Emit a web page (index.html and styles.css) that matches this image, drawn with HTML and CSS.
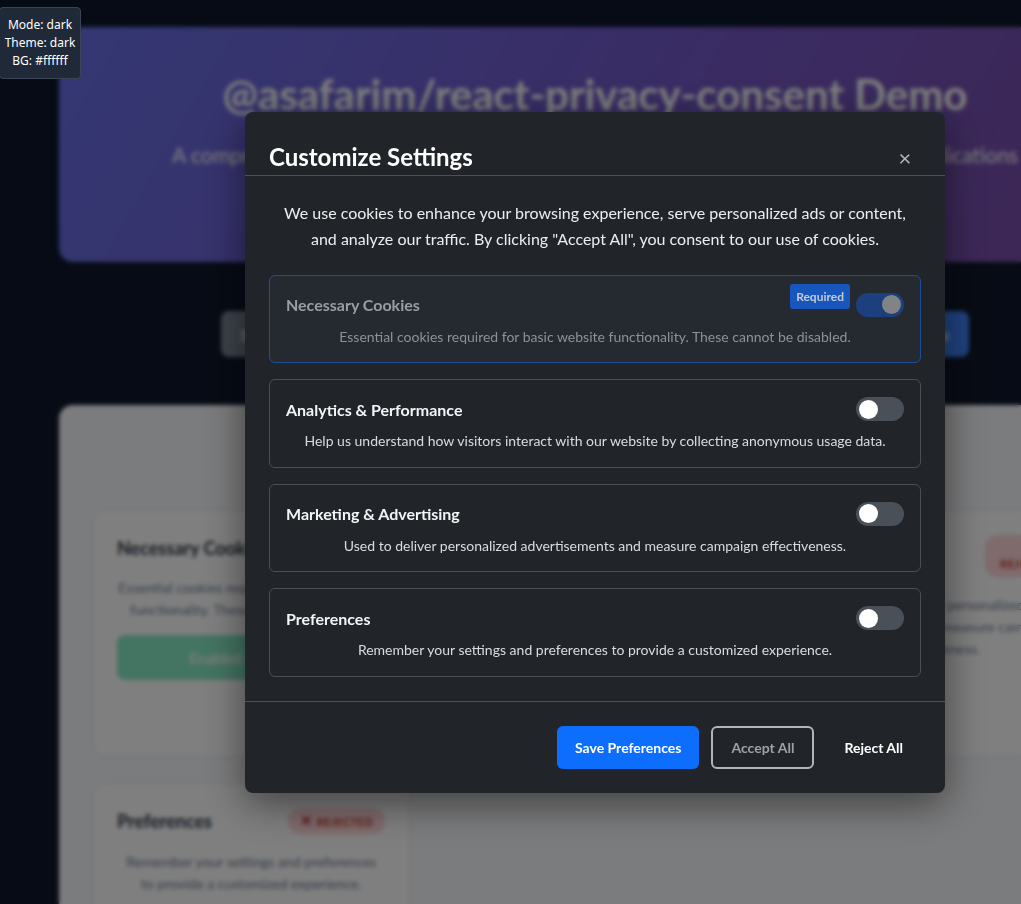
FILE: index.html
```html
<!DOCTYPE html>
<html lang="en">
<head>
<meta charset="utf-8">
<title>react-privacy-consent Demo</title>
<link rel="stylesheet" href="styles.css">
</head>
<body>
<div class="page">
  <header class="hero">
    <h1>@asafarim/react-privacy-consent Demo</h1>
    <p>A comprehensive, customizable privacy consent management solution for React applications</p>
  </header>
  <div class="actions">
    <button class="act act-gray">Show Banner</button>
    <button class="act act-gray">Open Settings</button>
    <button class="act act-gray">Reset Consent</button>
    <button class="act act-gray">Toggle Theme</button>
    <button class="act act-blue">Toggle Mode</button>
  </div>
  <section class="demo">
    <h2>Current Consent Status</h2>
    <div class="grid">
      <div class="dcard">
        <div class="dhead"><h3>Necessary Cookies</h3><span class="status ok">✓ Accepted</span></div>
        <p>Essential cookies required for basic website functionality. These cannot be disabled.</p>
        <div class="dbtn">Enabled (Required)</div>
      </div>
      <div class="dcard">
        <div class="dhead"><h3>Analytics</h3><span class="status no">✕ Rejected</span></div>
        <p>Help us understand how visitors interact with our website.</p>
      </div>
      <div class="dcard">
        <div class="dhead"><h3>Marketing &amp; Ads</h3><span class="status no wrap"><span>✕</span><span>Rejected</span></span></div>
        <p>Used to deliver personalized advertisements and measure campaign effectiveness.</p>
      </div>
      <div class="dcard">
        <div class="dhead"><h3>Preferences</h3><span class="status no"><span class="x">✕</span> Rejected</span></div>
        <p class="narrow">Remember your settings and preferences to provide a customized experience.</p>
      </div>
    </div>
  </section>
</div>

<div class="overlay">
  <div class="modal" role="dialog" aria-label="Customize Settings">
    <div class="mhead">
      <h2>Customize Settings</h2>
      <button class="close" aria-label="Close">×</button>
    </div>
    <div class="mbody">
      <p class="intro">We use cookies to enhance your browsing experience, serve personalized ads or content, and analyze our traffic. By clicking "Accept All", you consent to our use of cookies.</p>
      <div class="cat cat-required">
        <div class="cat-row">
          <h3>Necessary Cookies</h3>
          <div class="cat-ctrl">
            <span class="req">Required</span>
            <span class="toggle on disabled"><span class="knob"></span></span>
          </div>
        </div>
        <p>Essential cookies required for basic website functionality. These cannot be disabled.</p>
      </div>
      <div class="cat">
        <div class="cat-row">
          <h3>Analytics &amp; Performance</h3>
          <span class="toggle"><span class="knob"></span></span>
        </div>
        <p>Help us understand how visitors interact with our website by collecting anonymous usage data.</p>
      </div>
      <div class="cat">
        <div class="cat-row">
          <h3>Marketing &amp; Advertising</h3>
          <span class="toggle"><span class="knob"></span></span>
        </div>
        <p>Used to deliver personalized advertisements and measure campaign effectiveness.</p>
      </div>
      <div class="cat">
        <div class="cat-row">
          <h3>Preferences</h3>
          <span class="toggle"><span class="knob"></span></span>
        </div>
        <p>Remember your settings and preferences to provide a customized experience.</p>
      </div>
    </div>
    <div class="mfoot">
      <button class="btn btn-save">Save Preferences</button>
      <button class="btn btn-accept">Accept All</button>
      <button class="btn btn-reject">Reject All</button>
    </div>
  </div>
</div>

<div class="debug">
  <div>Mode: dark</div>
  <div>Theme: dark</div>
  <div>BG: #ffffff</div>
</div>
</body>
</html>
```
FILE: styles.css
```css
* { box-sizing: border-box; }
html, body { margin: 0; overflow: hidden; }
body {
  width: 1190px;
  height: 904px;
  background: #0f172a;
  font-family: Lato, "Liberation Sans", sans-serif;
  position: relative;
}

/* background demo page */
.page { padding: 27px 59px 0; }
.hero {
  height: 235px;
  border-radius: 14px;
  background: linear-gradient(120deg, #6870e8 0%, #7458c8 55%, #7a4ca4 100%);
  color: #fff;
  text-align: center;
  padding-top: 42px;
}
.hero h1 { margin: 0; font-size: 42px; line-height: 50px; font-weight: 700; }
.hero p { margin: 24px 0 0; font-size: 21px; line-height: 24px; }

.actions { margin-top: 49px; display: flex; justify-content: center; gap: 16px; }
.act {
  height: 46px; padding: 0 20px; border: 0; border-radius: 8px;
  font: 600 16px Lato, sans-serif; color: #fff;
}
.act-gray { background: #7b8494; }
.act-blue { background: #3f86ff; }

.demo {
  margin-top: 48px;
  background: #f7f8fa;
  border-radius: 14px;
  padding: 34px;
  height: 600px;
}
.demo h2 { margin: 0 0 39px; font-size: 24px; line-height: 32px; text-align: center; color: #2d3748; }
.grid { display: grid; grid-template-columns: repeat(3, 1fr); gap: 26px; }
.dcard {
  background: #fff; border: 1px solid #e6e8ec; border-radius: 12px;
  padding: 24px 24px 24px 23px; min-height: 247px;
}
.dhead { display: flex; justify-content: space-between; align-items: center; gap: 8px; }
.dhead h3 { margin: 0; font-size: 18px; color: #2d3748; }
.dcard p { margin: 17px 0 0; font-size: 14px; line-height: 22px; color: #718096; text-align: center; }
.dcard p.narrow { padding: 0 6px; }
.status {
  font-size: 11px; font-weight: 700; text-transform: uppercase; letter-spacing: .5px;
  padding: 5px 12px; border-radius: 12px; line-height: 15px;
}
.status .x { font-size: 15px; }
.status.ok { background: #c6f6d5; color: #22543d; }
.status.no { background: #fed7d7; color: #c53030; }
.status.wrap { display: flex; flex-direction: column; align-items: center; padding: 6px 12px; width: 87px; }
.dbtn {
  margin-top: 14px; height: 45px; border-radius: 8px; background: #88e8c4;
  color: #fff; font-size: 15px; font-weight: 600; display: flex; align-items: center; justify-content: center;
}

/* overlay + modal */
.overlay {
  position: absolute; left: 0; top: 0; width: 1190px; height: 904px;
  background: rgba(0, 0, 0, .5);
  backdrop-filter: blur(2px);
  display: flex; align-items: center; justify-content: center;
}
.modal {
  width: 700px; background: #212529; border-radius: 8px; color: #fff;
  box-shadow: 0 10px 40px rgba(0, 0, 0, .5);
}
.mhead {
  display: flex; justify-content: space-between; align-items: center;
  padding: 29px 24px 3px; border-bottom: 1px solid #4b5056;
}
.mhead h2 { margin: 0; font-size: 24px; line-height: 29px; font-weight: 700; color: #fff; }
.close {
  width: 32px; height: 29px; border: 0; background: none; color: #b4b9be;
  font: 22px/29px Lato, sans-serif; padding: 0; margin-top: 2px;
}
.mbody { padding: 24px; }
.intro { margin: 0 0 23px; padding: 0 10px; font-size: 16px; line-height: 26px; text-align: center; color: #eceef0; }
.cat {
  border: 1px solid #4a4f55; border-radius: 6px; padding: 15px 16px 15.5px;
  margin-bottom: 16px;
}
.cat:last-child { margin-bottom: 0; }
.cat-row { display: flex; justify-content: space-between; align-items: center; height: 28px; }
.cat h3 { margin: 0; font-size: 16px; font-weight: 700; color: #f3f4f6; }
.cat p { margin: 8px 0 0; font-size: 14px; line-height: 20px; text-align: center; color: #d9dcdf; }
.cat-required { border-color: #1c4f9a; background: #252a31; }
.cat-required h3 { color: #9a9ea4; }
.cat-required p { color: #8d9197; }
.cat-ctrl { display: flex; align-items: center; gap: 6px; }
.req {
  background: #1656bd; color: #c3cad6; font-size: 12px; font-weight: 700;
  padding: 0 6px; height: 25px; line-height: 25px; border-radius: 3px; margin-top: -16px;
}
.toggle {
  width: 48px; height: 24px; border-radius: 12px; background: #495057;
  display: flex; align-items: center; padding: 0 3px;
}
.toggle .knob { width: 19px; height: 19px; border-radius: 50%; background: #fff; }
.toggle.on { background: #1c407e; justify-content: flex-end; }
.toggle.on .knob { background: #818386; }

.mfoot {
  border-top: 1px solid #4b5056; padding: 24px;
  display: flex; justify-content: flex-end; gap: 12px;
}
.btn {
  height: 43px; padding: 0 18px; border-radius: 6px; font: 700 14px Lato, sans-serif;
  border: 0; background: none; color: #fff;
}
.btn-save { background: #0d6efd; }
.btn-accept { border: 2px solid #b0b5ba; color: #9ca2a8; background: transparent; }
.btn-reject { color: #fff; }

/* debug badge */
.debug {
  position: absolute; left: -1px; top: 7px; width: 82px;
  background: #1f2937; border: 1px solid #3a4452; border-radius: 4px;
  padding: 8px 0; color: #fff; font: 12px/18px "Noto Sans", sans-serif; text-align: center;
}
```
